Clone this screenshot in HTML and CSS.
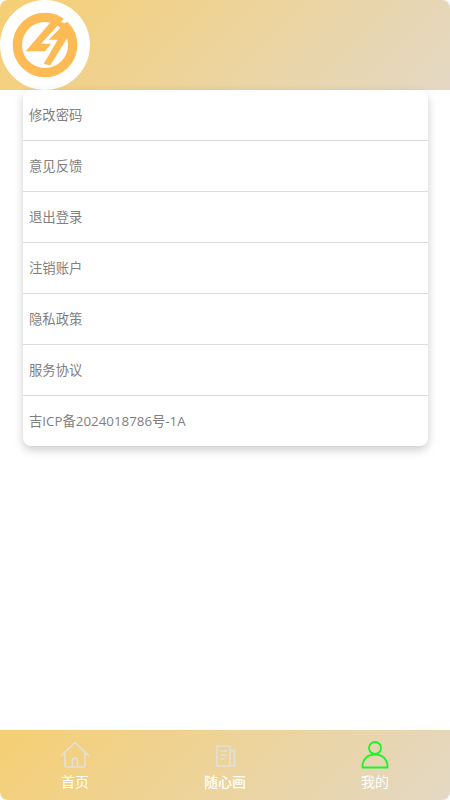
FILE: index.html
```html
<!DOCTYPE html>
<html lang="zh-CN">
<head>
<meta charset="utf-8">
<title>我的</title>
<link rel="stylesheet" href="styles.css">
</head>
<body>
<div class="app">
  <header class="top">
    <div class="avatar">
      <svg width="90" height="90" viewBox="-45 -24 270 270">
        <circle class="ring" cx="90" cy="111" r="83"/>
        <path class="bolt-cut" d="M138 42 156 22 170 30 150 46Z"/>
        <path class="bolt" d="M118 30 138 42 78 107H108L90 130H32Z"/>
        <path class="bolt" d="M150 46 174 62 106 172 86 168 128 95H101Z"/>
      </svg>
    </div>
  </header>
  <ul class="menu">
    <li class="row">修改密码</li>
    <li class="row">意见反馈</li>
    <li class="row">退出登录</li>
    <li class="row">注销账户</li>
    <li class="row">隐私政策</li>
    <li class="row">服务协议</li>
    <li class="row">吉ICP备2024018786号-1A</li>
  </ul>
  <nav class="tabs">
    <div class="tab">
      <svg width="30" height="30" viewBox="0 0 30 30"><path class="ic" d="M1.500 15.500 15 2.500l13.500 13M5 12.500V26a1 1 0 0 0 1 1h18a1 1 0 0 0 1-1V12.500M12.500 27v-6.500a2.500 2.500 0 0 1 5 0V27"/></svg>
      <span class="label">首页</span>
    </div>
    <div class="tab">
      <svg width="30" height="30" viewBox="0 0 30 30"><path class="ic" d="M7 6h13v20H7zM20 10.500h4.500V26H7M11 11h5.500M11 15h5.500M11 19h3.500"/></svg>
      <span class="label label-strong">随心画</span>
    </div>
    <div class="tab">
      <svg width="30" height="30" viewBox="0 0 30 30"><g class="ic-on"><circle cx="15" cy="8" r="6"/><path d="M2.500 27.500c-.500-8 5-13 12.500-13s13 5 12.500 13z"/></g></svg>
      <span class="label">我的</span>
    </div>
  </nav>
</div>
</body>
</html>
```
FILE: styles.css
```css
* { box-sizing: border-box; }
html, body { margin: 0; padding: 0; height: 100%; }
body {
  background: #fff;
  font-family: "Open Sans", "Noto Sans CJK SC", sans-serif;
}
.app {
  height: 800px;
  display: flex;
  flex-direction: column;
}
.top {
  height: 90px;
  flex: none;
  border-radius: 8px 8px 0 0;
  background: linear-gradient(135deg, #f6cf73 0%, #e3d8c4 100%);
}
.avatar {
  width: 90px;
  height: 90px;
  border-radius: 50%;
  background: #fff;
}
.avatar svg { display: block; }
.ring { fill: none; stroke: #fdbb56; stroke-width: 28; }
.bolt-cut { fill: #fff; }
.bolt { fill: #fdbb56; }
.menu {
  list-style: none;
  margin: 0 22px 0 23px;
  padding: 0;
  background: #fff;
  border-radius: 8px;
  box-shadow: 0 4px 10px rgba(0, 0, 0, .2);
  flex: none;
}
.row {
  height: 51px;
  padding: 0 0 2px 6px;
  display: flex;
  align-items: center;
  font-size: 13.33px;
  color: #808080;
  border-bottom: 1px solid #dcdcdc;
}
.row:last-child { height: 50px; border-bottom: 0; }
.tabs {
  margin-top: auto;
  height: 70px;
  flex: none;
  display: flex;
  border-radius: 0 0 8px 8px;
  background: linear-gradient(135deg, #f6cf73 0%, #e3d8c4 100%);
}
.tab {
  flex: 1;
  display: flex;
  flex-direction: column;
  align-items: center;
  padding-top: 10px;
}
.tab svg { display: block; }
.label {
  margin-top: 2px;
  font-size: 14px;
  line-height: 20px;
  color: #fff;
}
.label-strong { font-weight: 500; }
.ic { fill: none; stroke: #e2e0d8; stroke-width: 1.600; stroke-linejoin: round; stroke-linecap: round; }
.ic-on { fill: none; stroke: #1cf52c; stroke-width: 1.800; stroke-linejoin: round; }
```
